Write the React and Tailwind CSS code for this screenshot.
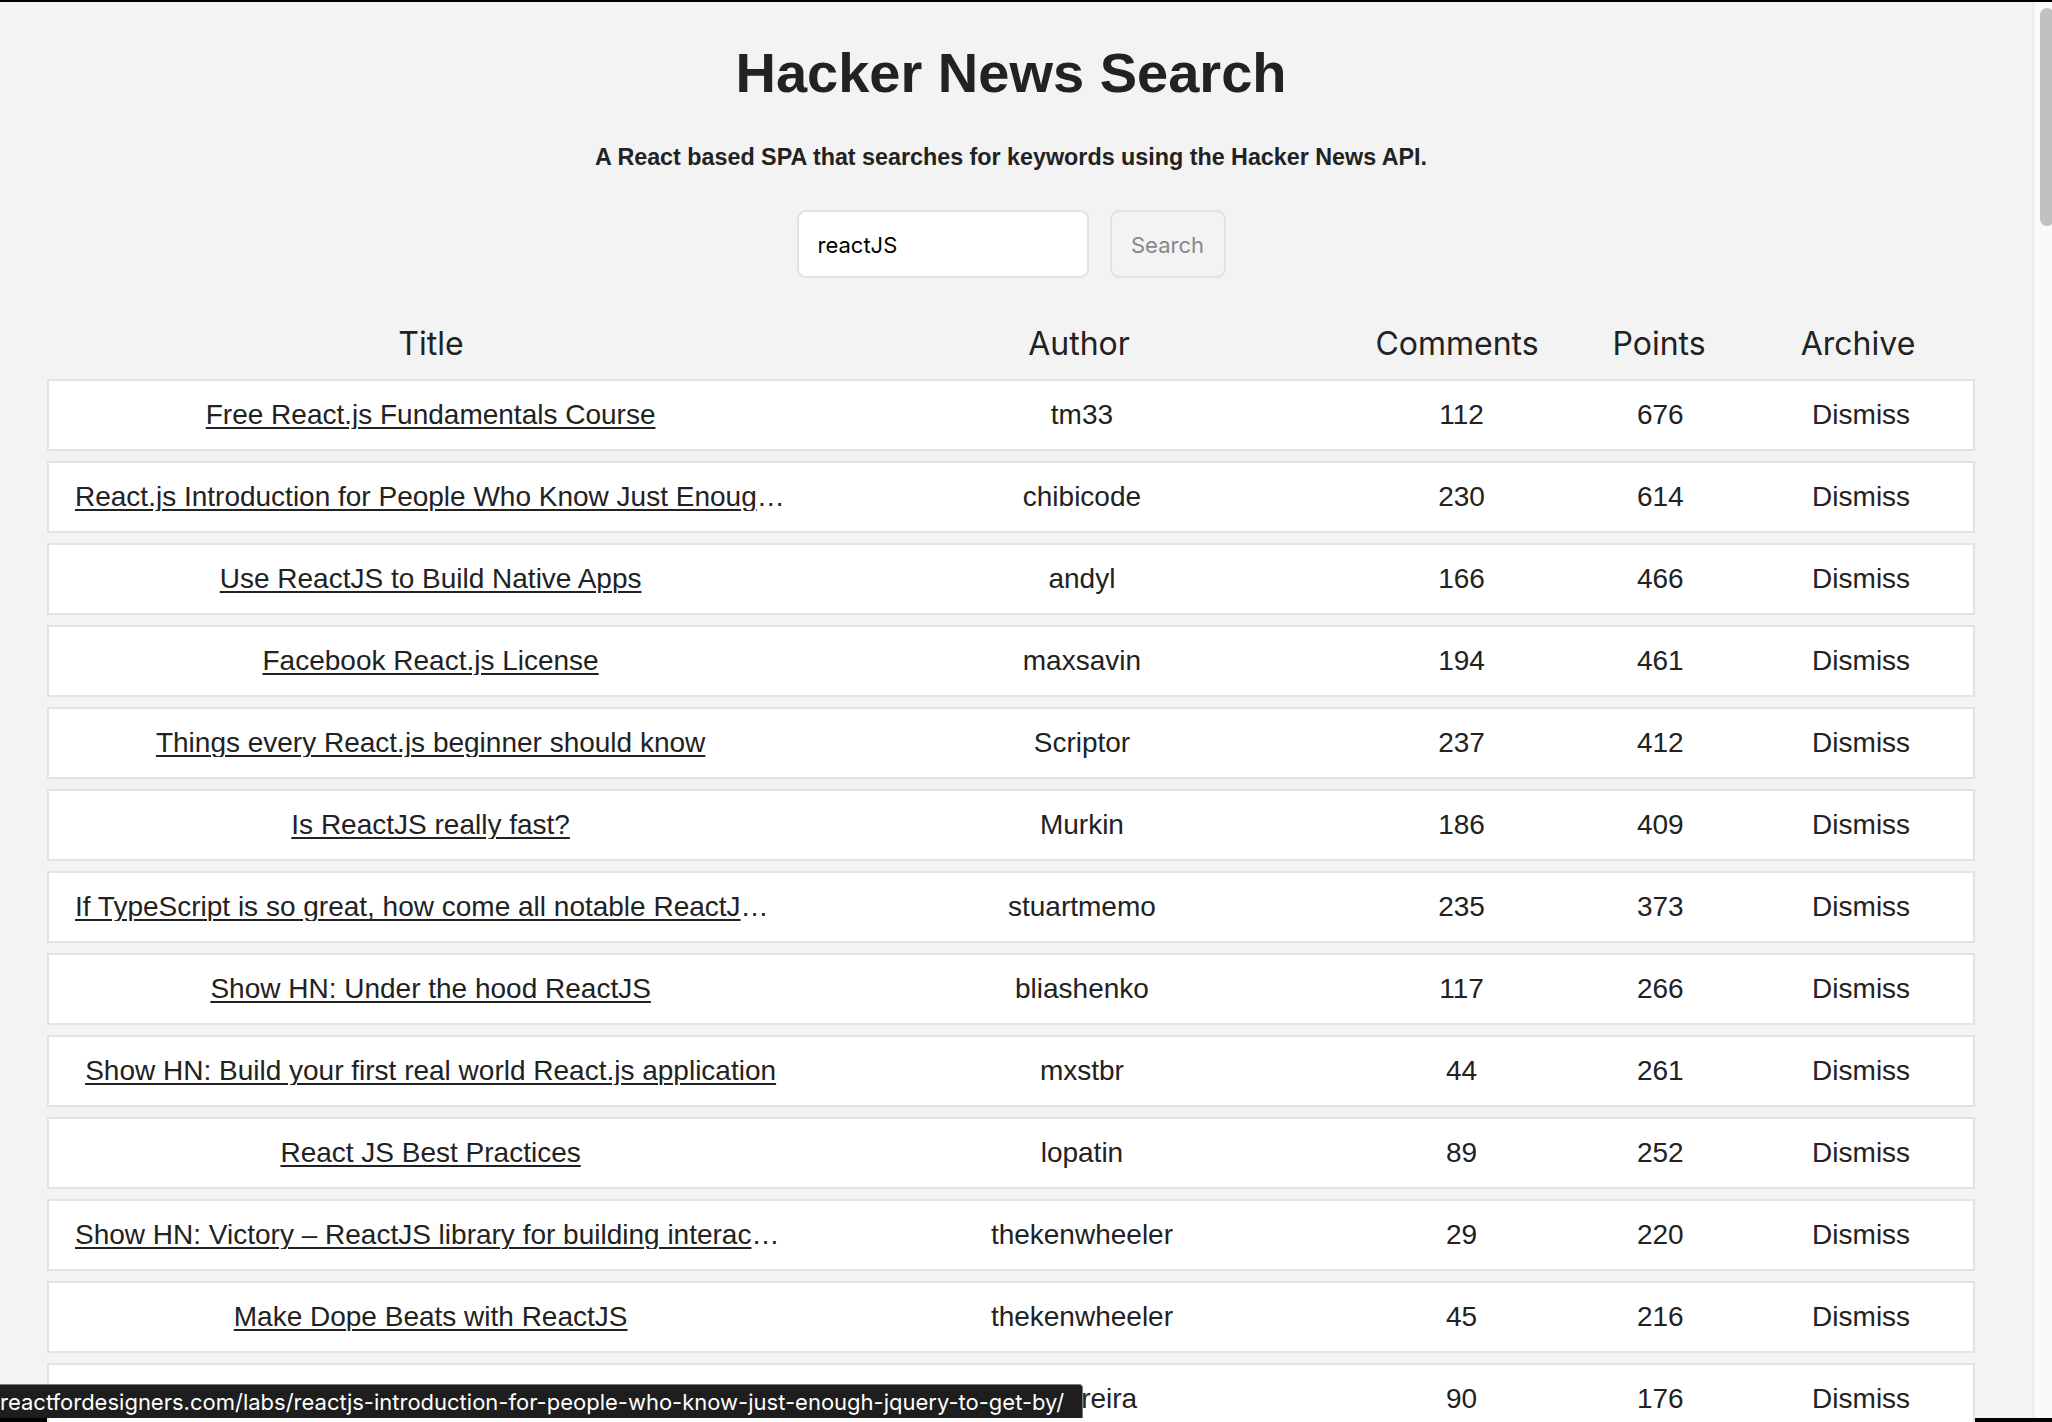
import React, { useState } from 'react'

const stories = [
  { title: 'Free React.js Fundamentals Course', author: 'tm33', comments: 112, points: 676 },
  { title: 'React.js Introduction for People Who Know Just Enough jQuery to Get By', author: 'chibicode', comments: 230, points: 614 },
  { title: 'Use ReactJS to Build Native Apps', author: 'andyl', comments: 166, points: 466 },
  { title: 'Facebook React.js License', author: 'maxsavin', comments: 194, points: 461 },
  { title: 'Things every React.js beginner should know', author: 'Scriptor', comments: 237, points: 412 },
  { title: 'Is ReactJS really fast?', author: 'Murkin', comments: 186, points: 409 },
  { title: 'If TypeScript is so great, how come all notable ReactJS projects use Babel?', author: 'stuartmemo', comments: 235, points: 373 },
  { title: 'Show HN: Under the hood ReactJS', author: 'bliashenko', comments: 117, points: 266 },
  { title: 'Show HN: Build your first real world React.js application', author: 'mxstbr', comments: 44, points: 261 },
  { title: 'React JS Best Practices', author: 'lopatin', comments: 89, points: 252 },
  { title: 'Show HN: Victory – ReactJS library for building interactive data visualizations', author: 'thekenwheeler', comments: 29, points: 220 },
  { title: 'Make Dope Beats with ReactJS', author: 'thekenwheeler', comments: 45, points: 216 },
  { title: 'ReactJS for Stupid People', author: 'mpereira', comments: 90, points: 176 },
]

const sans = "font-['Liberation_Sans',Arial,sans-serif]"
const ui = "font-['Inter','Noto_Sans',sans-serif]"

const Row = ({ item }) => (
  <div className={`h-[72px] shrink-0 flex items-center bg-white border-2 border-[#e3e3e3] pl-[13px] pr-[9px] text-[28px] leading-none text-[#222] ${sans}`}>
    <span className="w-[742px] pl-[13px] pr-[17px] text-center truncate">
      <a href="#" className="underline decoration-2 underline-offset-[3px]">{item.title}</a>
    </span>
    <span className="w-[558px] text-center">{item.author}</span>
    <span className="w-[202px] text-center">{item.comments}</span>
    <span className="w-[196px] text-center">{item.points}</span>
    <span className="w-[206px] text-center">
      <button className="leading-none">Dismiss</button>
    </span>
  </div>
)

export default function App() {
  const [query, setQuery] = useState('reactJS')

  return (
    <div className="h-[1422px] w-full overflow-hidden flex flex-col bg-[#f3f3f3]">
      <div className="h-[2px] shrink-0 bg-black" />

      <div className="flex-1 flex min-h-0 relative">
        {/* main page */}
        <main className="flex-1 min-w-0 pl-[47px] pr-[58px] flex flex-col">
          <h1 className={`mt-[43px] text-center text-[56px] leading-none font-bold text-[#222] ${sans}`}>
            Hacker News Search
          </h1>
          <p className={`mt-[45px] text-center text-[23.3px] leading-none font-bold text-[#222] ${sans}`}>
            A React based SPA that searches for keywords using the Hacker News API.
          </p>

          <form className="mt-[41px] flex justify-center gap-[21px]" onSubmit={(e) => e.preventDefault()}>
            <input
              value={query}
              onChange={(e) => setQuery(e.target.value)}
              className={`w-[292px] h-[68px] bg-white border-2 border-[#e2e2e2] rounded-[9px] pl-[19px] pt-[2px] text-[22px] text-black outline-none ${ui}`}
            />
            <button className={`w-[116px] h-[68px] bg-[#f3f3f3] border-2 border-[#e2e2e2] rounded-[9px] pt-[2px] text-[22px] text-[#888] ${ui}`}>
              Search
            </button>
          </form>

          <div className={`mt-[50px] h-[32px] flex pl-[13px] pr-[9px] text-[32px] leading-none text-[#222] ${ui}`}>
            <span className="w-[742px] text-center">Title</span>
            <span className="w-[554px] text-center">Author</span>
            <span className="w-[202px] text-center">Comments</span>
            <span className="w-[202px] text-center">Points</span>
            <span className="w-[196px] text-center">Archive</span>
          </div>

          <div className="mt-[19px] flex flex-col gap-[10px]">
            {stories.map((s) => (
              <Row key={s.title} item={s} />
            ))}
          </div>
        </main>

        {/* scrollbar */}
        <div className="w-[19px] shrink-0 bg-[#fafafa] border-l border-[#e6e6e6] pt-[6px] pl-[6px] overflow-hidden">
          <div className="w-[14px] h-[218px] rounded-[7px] bg-[#c1c1c1]" />
        </div>

        {/* link status bubble */}
        <div className="absolute left-0 bottom-0 w-[1083px] h-[34px] bg-[#1e1e1e] border-t border-r border-[#7a7a7a] rounded-tr-[4px] flex items-center overflow-hidden">
          <span className={`whitespace-nowrap text-[22px] leading-none text-white ${ui}`}>
            reactfordesigners.com/labs/reactjs-introduction-for-people-who-know-just-enough-jquery-to-get-by/
          </span>
        </div>
      </div>

      <div className="h-[4px] shrink-0 bg-black" />
    </div>
  )
}
